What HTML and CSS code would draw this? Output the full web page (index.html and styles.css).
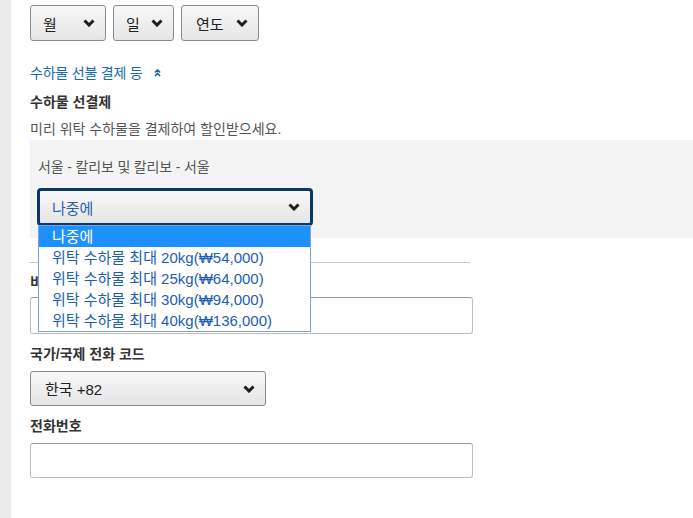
FILE: index.html
```html
<!DOCTYPE html>
<html lang="ko">
<head>
    <meta charset="UTF-8">
    <meta name="viewport" content="width=device-width, initial-scale=1.0">
    <title>수하물 선결제</title>
    <link rel="stylesheet" href="styles.css">
</head>
<body>

    <!-- Left rail -->
    <aside class="rail"></aside>

    <main class="form">

        <!-- Birth date selects -->
        <div class="date-row">
            <div class="select select-month"><span>월</span><svg class="chev" viewBox="0 0 12 8"><path d="M1.5 1.5 6 6l4.5-4.5"/></svg></div>
            <div class="select select-day"><span>일</span><svg class="chev" viewBox="0 0 12 8"><path d="M1.5 1.5 6 6l4.5-4.5"/></svg></div>
            <div class="select select-year"><span>연도</span><svg class="chev" viewBox="0 0 12 8"><path d="M1.5 1.5 6 6l4.5-4.5"/></svg></div>
        </div>

        <!-- Extras toggle -->
        <a href="#" class="toggle-link">수하물 선불 결제 등
            <svg class="dbl-caret" viewBox="0 0 8 9"><path d="M1 4 4 1l3 3M1 8l3-3 3 3"/></svg>
        </a>

        <h3 class="section-title">수하물 선결제</h3>
        <p class="section-desc">미리 위탁 수하물을 결제하여 할인받으세요.</p>

        <!-- Baggage panel -->
        <section class="baggage-panel">
            <p class="route">서울 - 칼리보 및 칼리보 - 서울</p>
            <div class="dropdown">
                <div class="select select-focus"><span>나중에</span><svg class="chev" viewBox="0 0 12 8"><path d="M1.5 1.5 6 6l4.5-4.5"/></svg></div>
                <ul class="options">
                    <li class="active">나중에</li>
                    <li>위탁 수하물 최대 20kg(₩54,000)</li>
                    <li>위탁 수하물 최대 25kg(₩64,000)</li>
                    <li>위탁 수하물 최대 30kg(₩94,000)</li>
                    <li>위탁 수하물 최대 40kg(₩136,000)</li>
                </ul>
            </div>
        </section>

        <hr class="divider">

        <!-- Contact fields -->
        <label class="field-label">비상 연락처 이름</label>
        <div class="text-input"></div>

        <label class="field-label">국가/국제 전화 코드</label>
        <div class="select select-country"><span>한국 +82</span><svg class="chev" viewBox="0 0 12 8"><path d="M1.5 1.5 6 6l4.5-4.5"/></svg></div>

        <label class="field-label">전화번호</label>
        <div class="text-input"></div>

    </main>

</body>
</html>
```

FILE: styles.css
```css
/* General Styling */
body {
    font-family: "Liberation Sans", "Noto Sans CJK KR", sans-serif;
    margin: 0;
    padding: 0;
    background: #fff;
    color: #333;
    display: flex;
    min-height: 518px;
}

.rail {
    width: 11px;
    flex-shrink: 0;
    background-color: #ebebeb;
}

.form {
    flex: 1;
    padding: 5px 0 0 19px;
    display: flex;
    flex-direction: column;
    align-items: flex-start;
}

/* Select boxes */
.select {
    box-sizing: border-box;
    display: flex;
    align-items: center;
    justify-content: space-between;
    height: 36px;
    padding: 0 10px 0 12px;
    border: 1px solid #8c8c8c;
    border-radius: 3px;
    background: linear-gradient(to bottom, #f8f8f8, #e5e5e5);
    font-size: 15px;
    color: #222;
}

.chev {
    width: 12px;
    height: 8px;
    fill: none;
    stroke: #1e1e1e;
    stroke-width: 3;
}

.date-row {
    display: flex;
    gap: 8px;
}

.select-month {
    width: 76px;
}

.select-day {
    width: 61px;
    margin-left: -1px;
}

.select-year {
    width: 78px;
    padding-left: 14px;
    margin-left: -1px;
}

/* Text blocks */
.toggle-link,
.section-title,
.section-desc,
.route,
.field-label {
    font-size: 14px;
    line-height: 20px;
}

/* Toggle link */
.toggle-link {
    margin-top: 22px;
    color: #1668b8;
    text-decoration: none;
    display: flex;
    align-items: center;
    gap: 11px;
    letter-spacing: -0.2px;
}

.dbl-caret {
    width: 7px;
    height: 8px;
    fill: none;
    stroke: #1668b8;
    stroke-width: 1.8;
}

.section-title {
    margin: 9px 0 0;
    font-weight: bold;
    color: #333;
}

.section-desc {
    margin: 7px 0 0;
    color: #555;
}

/* Baggage Panel */
.baggage-panel {
    box-sizing: border-box;
    align-self: stretch;
    margin-top: 1px;
    padding: 17px 7px 12px;
    background-color: #f4f4f4;
}

.route {
    margin: 0 0 11px 1px;
    color: #555;
    letter-spacing: -0.15px;
}

.dropdown {
    position: relative;
    width: 276px;
}

.select-focus {
    height: 38px;
    border: 3px solid #0c3963;
    border-radius: 4px;
    padding: 0 10px 0 12px;
    color: #2c5fae;
}

.options {
    position: absolute;
    top: 37px;
    left: 1px;
    width: 273px;
    box-sizing: border-box;
    margin: 0;
    padding: 0;
    list-style: none;
    background: #fff;
    border: 1px solid #7ea3dc;
    z-index: 2;
}

.options li {
    height: 21px;
    line-height: 21px;
    padding-left: 13px;
    font-size: 15px;
    color: #1d5db3;
    white-space: nowrap;
}

.options li.active {
    background-color: #1e90ff;
    color: #fff;
}

/* Contact fields */
.divider {
    width: 440px;
    margin: 24px 0 0;
    border: none;
    border-top: 1px solid #c8c8c8;
}

.field-label {
    margin-top: 9px;
    font-weight: bold;
    color: #333;
}

.text-input {
    box-sizing: border-box;
    width: 443px;
    height: 37px;
    margin-top: 5px;
    border: 1px solid #bdbdbd;
    border-top-color: #999;
    border-radius: 3px;
    background: #fff;
}

.text-input + .field-label {
    margin-top: 10px;
}

.select-country {
    width: 236px;
    height: 35px;
    margin-top: 7px;
    padding-left: 14px;
}

.select-country + .field-label {
    margin-top: 10px;
}

.select-country + .field-label + .text-input {
    margin-top: 7px;
    height: 35px;
}
```
